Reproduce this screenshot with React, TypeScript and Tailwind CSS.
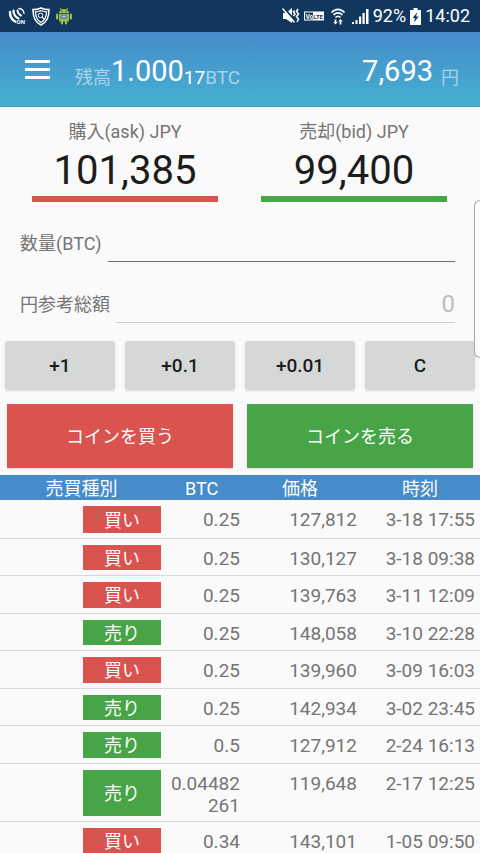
import React from 'react'

type Side = 'buy' | 'sell'

const trades: { side: Side; amount: string; price: string; time: string }[] = [
    { side: 'buy', amount: '0.25', price: '127,812', time: '3-18 17:55' },
    { side: 'buy', amount: '0.25', price: '130,127', time: '3-18 09:38' },
    { side: 'buy', amount: '0.25', price: '139,763', time: '3-11 12:09' },
    { side: 'sell', amount: '0.25', price: '148,058', time: '3-10 22:28' },
    { side: 'buy', amount: '0.25', price: '139,960', time: '3-09 16:03' },
    { side: 'sell', amount: '0.25', price: '142,934', time: '3-02 23:45' },
    { side: 'sell', amount: '0.5', price: '127,912', time: '2-24 16:13' },
    { side: 'sell', amount: '0.04482261', price: '119,648', time: '2-17 12:25' },
    { side: 'buy', amount: '0.34', price: '143,101', time: '1-05 09:50' },
]

const StatusBar = () => (
    <div className="flex h-8 shrink-0 items-center justify-between bg-[#12375f] pl-2 pr-[10px] text-white">
        <div className="flex items-center gap-1.5">
            {/* NFC */}
            <svg width="18" height="18" viewBox="0 0 18 18" fill="none" stroke="white" strokeLinecap="round">
                <path d="M2 5c0 4.500 2 8 5.500 9.800" strokeWidth="2.400" />
                <path d="M5.500 3.500c0 3.500 2 6.500 5 8" strokeWidth="2.200" />
                <path d="M9.500 3.500c.2 2 1.500 4 3.500 5" strokeWidth="2" />
                <path d="M11 1.500c2.800.3 4.700 2.200 5 5" strokeWidth="1.300" />
                <text x="8.500" y="17" fontSize="6" fontWeight="700" fill="white" stroke="none" fontFamily="Roboto, sans-serif">ON</text>
            </svg>
            {/* shield */}
            <svg width="18" height="19" viewBox="0 0 18 19" fill="none" stroke="white">
                <path d="M9 1c2.500 1.200 5 1.600 8 1.600C17 10 15.500 15 9 18 2.500 15 1 10 1 2.600 4 2.600 6.500 2.200 9 1z" strokeWidth="1.600" />
                <path d="M9 3.500c2 .8 3.700 1.200 5.600 1.300C14.400 10 13 13.500 9 15.500 5 13.500 3.600 10 3.400 4.800 5.300 4.700 7 4.300 9 3.500z" strokeWidth="1.200" />
                <circle cx="8.500" cy="8.300" r="2.300" />
                <path d="M10.300 10.200l2 2.200" strokeWidth="1.400" />
            </svg>
            {/* android */}
            <svg width="16" height="18" viewBox="0 0 16 18" fill="#9dbf3b">
                <path d="M4.200 1l1.300 2M11.800 1l-1.300 2" stroke="#9dbf3b" />
                <path d="M3 6a5 4 0 0 1 10 0zM3 6.800h10v6.700a1 1 0 0 1-1 1H4a1 1 0 0 1-1-1z" />
                <rect x="0" y="6.500" width="2.200" height="6" rx="1.100" />
                <rect x="13.800" y="6.500" width="2.200" height="6" rx="1.100" />
                <rect x="4.800" y="13" width="2.300" height="4.500" rx="1.100" />
                <rect x="8.900" y="13" width="2.300" height="4.500" rx="1.100" />
                <rect x="4.500" y="7.500" width="7" height="4.500" fill="#5f86a8" />
                <path d="M6 10.500l2-1.500 2 1.500" fill="none" stroke="#cfe0ee" />
                <circle cx="6" cy="4.500" r=".6" fill="#12375f" />
                <circle cx="10" cy="4.500" r=".6" fill="#12375f" />
            </svg>
        </div>
        <div className="flex items-center gap-1 text-lg">
            {/* muted */}
            <svg width="18" height="18" viewBox="0 0 18 18" fill="white">
                <path d="M1 6h3l6-5v15l-6-4H1z" />
                <path d="M2 1l12 14" stroke="#12375f" strokeWidth="2" />
                <path d="M.5 1.500l12 14" stroke="white" strokeWidth="1.500" />
                <path d="M12.500 3.500l-1 1.500 1.500 2-1.500 2M16 2l-1.500 2.500L16.500 7 14.500 9.500l2 2.500-1.500 3" fill="none" stroke="white" strokeWidth="1.500" />
            </svg>
            {/* VoLTE */}
            <svg width="20" height="10" viewBox="0 0 20 10">
                <rect x=".5" y="1" width="19" height="8" fill="none" stroke="white" />
                <rect x="9" y="1" width="11" height="8" fill="white" />
                <text x="1.500" y="7.500" fontSize="6.500" fontWeight="700" fill="white" fontFamily="Roboto, sans-serif">Vo</text>
                <text x="9.300" y="7.500" fontSize="6" fontWeight="700" fill="#12375f" fontFamily="Roboto, sans-serif">LTE</text>
            </svg>
            {/* wifi */}
            <svg width="20" height="18" viewBox="0 0 20 18" fill="none" stroke="white" strokeWidth="1.700">
                <path d="M3.500 5.500c3.800-4.300 9.200-4.300 13 0M5.500 8c2.700-2.900 6.300-2.900 9 0M7.500 10.500c1.500-1.700 3.500-1.700 5 0" />
                <path d="M7.500 17.500l-2.200-2.500h4.400zM12.500 12l2.200 2.500h-4.400z" fill="white" stroke="none" />
                <path d="M7.500 12.500v3M12.500 14v3.500" />
            </svg>
            {/* signal */}
            <svg width="17" height="17" viewBox="0 0 17 17" fill="white">
                <path d="M0 14h2v2H0zM3.500 12h2v4h-2zM7 8.500h2.200V16H7zM10.500 5h2.200v11h-2.200zM14 1h2.500v15H14z" />
            </svg>
            <span>92%</span>
            {/* charging */}
            <svg width="11" height="17" viewBox="0 0 11 17" fill="white">
                <path d="M3.500 0h4v2H11v15H0V2h3.500z" />
                <path d="M7.500 4L2.500 10h2.500L4 14.500 8.700 8.500H6z" fill="#12375f" />
            </svg>
            <span>14:02</span>
        </div>
    </div>
)

const Header = () => (
    <header className="flex h-[75px] shrink-0 items-center border-b border-[#3f97bd] bg-linear-to-b from-[#478bca] to-[#44b0d0] pl-[25px] pr-[21px] text-white">
        <button type="button" aria-label="メニュー" className="mr-[25px] flex w-[25px] flex-col gap-[5px]">
            <span className="h-[3px] w-full bg-white" />
            <span className="h-[3px] w-full bg-white" />
            <span className="h-[3px] w-full bg-white" />
        </button>
        <div className="flex flex-1 items-end pt-1">
            <span className="text-lg text-[#a9d3ea]">残高</span>
            <span className="text-[29px] leading-[42px]">1.000</span>
            <span className="text-[19px] leading-7">17</span>
            <span className="text-[19px] leading-7 text-[#a9d3ea]">BTC</span>
        </div>
        <div className="flex items-end gap-2 pt-1">
            <span className="text-[29px] leading-[42px]">7,693</span>
            <span className="text-lg text-[#a9d3ea]">円</span>
        </div>
    </header>
)

const App = () => {
    return (
        <div className="relative flex h-screen flex-col overflow-hidden bg-[#fafafa] font-['Roboto','Noto_Sans_CJK_JP',sans-serif] text-[#757575]">
            <StatusBar />
            <Header />

            <main>
                <div className="flex gap-[43px] pl-8 pr-[33px] pt-[11px] text-center">
                    <div className="flex-1 border-b-[6px] border-[#d9534f]">
                        <div className="text-lg">購入(ask) JPY</div>
                        <div className="text-[40px] leading-[50px] text-[#1c1c1c]">101,385</div>
                    </div>
                    <div className="flex-1 border-b-[6px] border-[#47a447]">
                        <div className="text-lg">売却(bid) JPY</div>
                        <div className="text-[40px] leading-[50px] text-[#1c1c1c]">99,400</div>
                    </div>
                </div>

                <div className="flex flex-col gap-5 pl-5 pr-[25px] pt-[19px]">
                    <div className="flex items-center gap-1.5">
                        <label htmlFor="amount" className="pt-1 text-lg">数量(BTC)</label>
                        <input id="amount" type="text" className="h-[41px] min-w-0 flex-1 border-b border-[#6c6c6c] bg-transparent pt-1 text-right text-2xl text-[#1c1c1c] outline-none" />
                    </div>
                    <div className="flex items-center gap-1.5">
                        <label htmlFor="total" className="pt-1 text-lg">円参考総額</label>
                        <input id="total" type="text" placeholder="0" className="h-[41px] min-w-0 flex-1 border-b border-[#cfcfcf] bg-transparent pt-1 text-right text-2xl outline-none placeholder:text-[#bdbdbd]" />
                    </div>
                </div>

                <div className="grid grid-cols-4 gap-2.5 px-[5px] pt-[18px] text-[19px] font-medium text-[#1c1c1c]">
                    <button type="button" className="h-[49px] rounded-[3px] bg-[#d6d8d7] pt-0.5 shadow">+1</button>
                    <button type="button" className="h-[49px] rounded-[3px] bg-[#d6d8d7] pt-0.5 shadow">+0.1</button>
                    <button type="button" className="h-[49px] rounded-[3px] bg-[#d6d8d7] pt-0.5 shadow">+0.01</button>
                    <button type="button" className="h-[49px] rounded-[3px] bg-[#d6d8d7] pt-0.5 shadow">C</button>
                </div>

                <div className="grid grid-cols-2 gap-3.5 px-[7px] pb-[7px] pt-3.5 text-lg text-white">
                    <button type="button" className="h-16 bg-[#d9534f] pt-0.5 shadow">コインを買う</button>
                    <button type="button" className="h-16 bg-[#47a447] pt-0.5 shadow">コインを売る</button>
                </div>

                <table className="w-full table-fixed border-collapse text-[19px] leading-[22px]">
                    <thead className="bg-[#468bca] text-lg text-white">
                        <tr className="h-[25px]">
                            <th className="w-[34%] p-0 pt-0.5 font-normal leading-[23px]">売買種別</th>
                            <th className="w-[16%] p-0 pt-0.5 font-normal leading-[23px]">BTC</th>
                            <th className="w-[25%] p-0 pt-0.5 font-normal leading-[23px]">価格</th>
                            <th className="w-[25%] p-0 pt-0.5 font-normal leading-[23px]">時刻</th>
                        </tr>
                    </thead>
                    <tbody>
                        {trades.map((trade) => (
                            <tr key={trade.time} className="border-b border-[#d9d9d9] odd:h-[38px] even:h-[37px]">
                                <td className="h-[inherit] pb-[5px] pl-[83px] pr-0.5 pt-1.5">
                                    <div className={`flex h-full items-center justify-center pt-0.5 text-lg leading-[23px] text-white ${trade.side === 'buy' ? 'bg-[#d9534f]' : 'bg-[#47a447]'}`}>
                                        {trade.side === 'buy' ? '買い' : '売り'}
                                    </div>
                                </td>
                                <td className="break-all pb-1 pt-[9px] text-right align-top">{trade.amount}</td>
                                <td className="pb-1 pr-[3px] pt-[9px] text-right align-top">{trade.price}</td>
                                <td className="whitespace-nowrap pb-1 pr-[5px] pt-[9px] text-right align-top">{trade.time}</td>
                            </tr>
                        ))}
                    </tbody>
                </table>
            </main>

            {/* edge panel handle */}
            <div className="absolute right-0 top-[200px] h-[158px] w-1.5 rounded-l-lg border border-r-0 border-[#a8a8a8] bg-white/50" />
        </div>
    )
}

export default App
